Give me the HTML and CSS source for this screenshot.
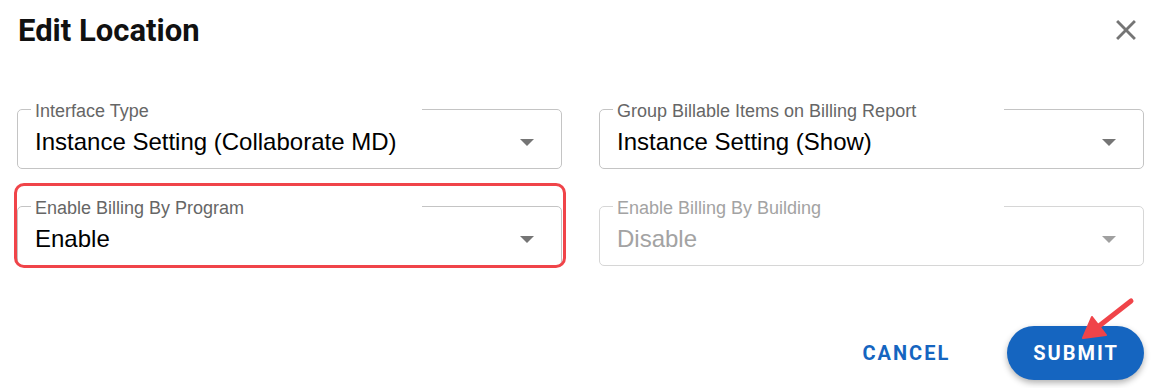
FILE: index.html
```html
<!DOCTYPE html>
<html lang="en">
<head>
<meta charset="utf-8">
<title>Edit Location</title>
<link rel="stylesheet" href="styles.css">
</head>
<body>
<div class="page">
  <header class="header">
    <h1 class="title">Edit Location</h1>
    <button class="close" type="button" aria-label="Close">
      <svg viewBox="0 0 24 24" width="34" height="34"><path d="M19 6.41 17.59 5 12 10.59 6.41 5 5 6.41 10.59 12 5 17.59 6.41 19 12 13.41 17.59 19 19 17.59 13.41 12z" fill="currentColor"/></svg>
    </button>
  </header>

  <div class="fields">
    <fieldset class="field">
      <legend class="label">Interface Type</legend>
      <div class="control">
        <span class="value">Instance Setting (Collaborate MD)</span>
        <svg class="caret" viewBox="0 0 14 7" width="14" height="7"><polygon points="0,0 14,0 7,7"/></svg>
      </div>
    </fieldset>

    <fieldset class="field">
      <legend class="label">Group Billable Items on Billing Report</legend>
      <div class="control">
        <span class="value">Instance Setting (Show)</span>
        <svg class="caret" viewBox="0 0 14 7" width="14" height="7"><polygon points="0,0 14,0 7,7"/></svg>
      </div>
    </fieldset>

    <div class="highlight-wrap">
      <fieldset class="field">
        <legend class="label">Enable Billing By Program</legend>
        <div class="control">
          <span class="value">Enable</span>
          <svg class="caret" viewBox="0 0 14 7" width="14" height="7"><polygon points="0,0 14,0 7,7"/></svg>
        </div>
      </fieldset>
      <div class="highlight"></div>
    </div>

    <fieldset class="field disabled">
      <legend class="label">Enable Billing By Building</legend>
      <div class="control">
        <span class="value">Disable</span>
        <svg class="caret" viewBox="0 0 14 7" width="14" height="7"><polygon points="0,0 14,0 7,7"/></svg>
      </div>
    </fieldset>
  </div>

  <footer class="actions">
    <button class="btn-text" type="button">CANCEL</button>
    <button class="btn-primary" type="button">SUBMIT</button>
  </footer>

  <svg class="annot-arrow" viewBox="1075 292 65 52" width="65" height="52">
    <line x1="1131" y1="301" x2="1099" y2="326" stroke="#f04449" stroke-width="5" stroke-linecap="round"/>
    <polygon points="1083,338 1092,317 1106,335" fill="#f04449" stroke="#f04449" stroke-width="2" stroke-linejoin="round"/>
  </svg>
</div>
</body>
</html>
```

FILE: styles.css
```css
html, body {
  margin: 0;
  padding: 0;
  background: #ffffff;
}

.page {
  position: relative;
  width: 1155px;
  height: 388px;
  box-sizing: border-box;
  padding: 0 11px 0 17px;
  font-family: "Liberation Sans", Arial, sans-serif;
  overflow: hidden;
}

.header {
  display: flex;
  justify-content: space-between;
  align-items: center;
  padding-top: 11px;
  height: 40px;
}

.title {
  margin: 0 0 0 1px;
  font-family: Roboto, "Liberation Sans", sans-serif;
  font-weight: 700;
  font-size: 31px;
  line-height: 40px;
  color: #111111;
}

.close {
  margin: -2px 1px 0 0;
  padding: 0;
  border: 0;
  background: none;
  color: #757575;
  width: 34px;
  height: 34px;
  display: flex;
}

.fields {
  margin-top: 47px;
  display: grid;
  grid-template-columns: 545px 545px;
  column-gap: 37px;
  row-gap: 26px;
}

.field {
  margin: 0;
  min-width: 0;
  border: 1px solid #c4c4c4;
  border-radius: 5px;
  padding: 7px 27px 12px 13px;
}

.label {
  box-sizing: border-box;
  width: 391px;
  padding: 3px 4px 0;
  font-size: 18px;
  line-height: 20px;
  color: #666666;
  white-space: nowrap;
}

.control {
  display: flex;
  align-items: center;
  justify-content: space-between;
  height: 28px;
  padding-left: 4px;
}

.value {
  font-size: 24px;
  line-height: 28px;
  color: #000000;
}

.caret {
  fill: #757575;
  display: block;
}

.disabled {
  border-color: #d6d6d6;
}

.disabled .label,
.disabled .value {
  color: #a3a3a3;
}

.disabled .caret {
  fill: #a0a0a0;
}

.highlight-wrap {
  position: relative;
}

.highlight {
  position: absolute;
  top: -12px;
  left: -3px;
  right: -4px;
  bottom: -2px;
  border: 3px solid #f04449;
  border-radius: 10px;
  pointer-events: none;
}

.actions {
  display: flex;
  justify-content: flex-end;
  align-items: center;
  gap: 57px;
  margin-top: 60px;
}

.btn-text,
.btn-primary {
  font-family: Roboto, "Liberation Sans", sans-serif;
  font-weight: 700;
  font-size: 20px;
  letter-spacing: 2px;
  border: 0;
  cursor: pointer;
}

.btn-text {
  background: none;
  color: #1565c0;
  padding: 0;
  line-height: 24px;
}

.btn-primary {
  height: 54px;
  padding: 0 25px 0 26px;
  border-radius: 27px;
  background: #1565c0;
  color: #ffffff;
  box-shadow: 0 3px 6px rgba(0, 0, 0, 0.3);
}

.annot-arrow {
  position: absolute;
  left: 1075px;
  top: 292px;
}
```
